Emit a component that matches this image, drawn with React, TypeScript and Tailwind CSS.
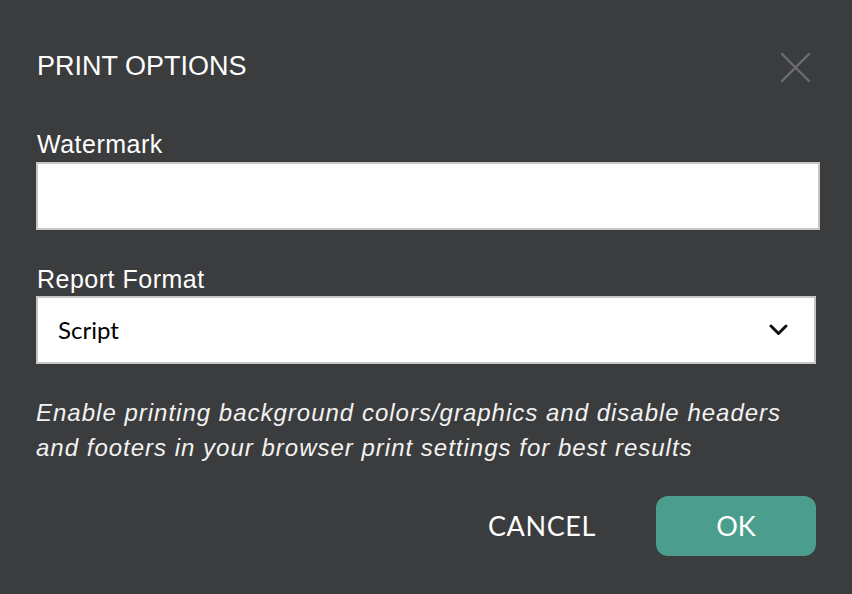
import React from "react";

const PrintOptions = () => {
  return (
    <div className="w-[852px] h-[594px] bg-[#3b3c3e] text-white font-['Liberation_Sans',Arial,sans-serif] pl-[36px] pr-[32px] pt-[51px]">
      {/* Header */}
      <div className="flex items-start justify-between">
        <h2 className="text-[27px] leading-[30px] ml-[1px]">PRINT OPTIONS</h2>
        <button className="mr-[10px] mt-[2px]">
          <svg width="29" height="29" viewBox="0 0 29 29" fill="none">
            <path
              d="M1 1L28 28M28 1L1 28"
              stroke="#6c6d70"
              strokeWidth="2.4"
              strokeLinecap="round"
            />
          </svg>
        </button>
      </div>

      {/* Watermark */}
      <label className="block text-[25px] leading-[28px] tracking-[0.5px] mt-[48px] ml-[1px]">
        Watermark
      </label>
      <input
        type="text"
        className="block mt-[4px] w-[784px] h-[68px] bg-white border-2 border-[#c6c6c6] outline-none"
      />

      {/* Report format */}
      <label className="block text-[25px] leading-[28px] tracking-[0.5px] mt-[35px] ml-[1px]">
        Report Format
      </label>
      <div className="mt-[3px] w-[780px] h-[68px] bg-white border-2 border-[#c6c6c6] flex items-center justify-between pl-[20px] pr-[26px] font-['Lato',sans-serif] text-black">
        <span className="text-[24px]">Script</span>
        <svg width="19" height="12" viewBox="0 0 19 12" fill="none">
          <path
            d="M2 2L9.5 9.5L17 2"
            stroke="#111"
            strokeWidth="3"
            strokeLinecap="round"
            strokeLinejoin="round"
          />
        </svg>
      </div>

      {/* Hint */}
      <p className="mt-[31px] italic text-[24px] leading-[35px] tracking-[1px] text-[#f2f2f2]">
        Enable printing background colors/graphics and disable headers
        <br />
        and footers in your browser print settings for best results
      </p>

      {/* Actions */}
      <div className="flex justify-end items-center mt-[31px] mr-[4px] font-['Lato',sans-serif]">
        <button className="text-[27px] tracking-[0.6px] mr-[60px]">CANCEL</button>
        <button className="w-[160px] h-[60px] rounded-[12px] bg-[#4b9e8d] text-[27px]">
          OK
        </button>
      </div>
    </div>
  );
};

export default function App() {
  return <PrintOptions />;
}
